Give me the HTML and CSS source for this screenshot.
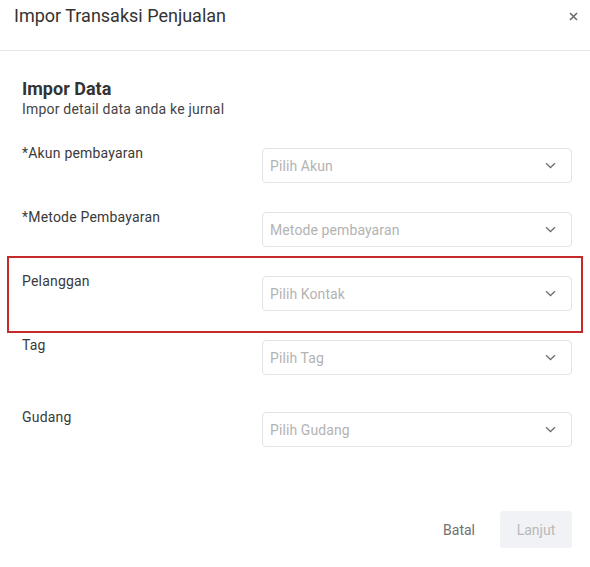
FILE: index.html
```html
<!DOCTYPE html>
<html lang="id">
<head>
<meta charset="utf-8">
<title>Impor Transaksi Penjualan</title>
<link rel="stylesheet" href="styles.css">
</head>
<body>
<div class="modal">
  <header class="modal-header">
    <h1 class="modal-title">Impor Transaksi Penjualan</h1>
    <button class="close" aria-label="Tutup">
      <svg width="9" height="9" viewBox="0 0 9 9"><path d="M1 1L8 8M8 1L1 8" stroke="#6b6b6b" stroke-width="1.6" fill="none"/></svg>
    </button>
  </header>
  <div class="modal-body">
    <div class="intro">
      <h2 class="intro-title">Impor Data</h2>
      <p class="intro-sub">Impor detail data anda ke jurnal</p>
    </div>

    <div class="row">
      <label class="label">*Akun pembayaran</label>
      <div class="select"><span class="placeholder">Pilih Akun</span>
        <svg class="chev" width="11" height="7" viewBox="0 0 11 7"><path d="M1 1.2L5.5 5.5L10 1.2" stroke="#707070" stroke-width="1.3" fill="none"/></svg></div>
    </div>
    <div class="row">
      <label class="label">*Metode Pembayaran</label>
      <div class="select"><span class="placeholder">Metode pembayaran</span>
        <svg class="chev" width="11" height="7" viewBox="0 0 11 7"><path d="M1 1.2L5.5 5.5L10 1.2" stroke="#707070" stroke-width="1.3" fill="none"/></svg></div>
    </div>
    <div class="row highlighted">
      <label class="label">Pelanggan</label>
      <div class="select"><span class="placeholder">Pilih Kontak</span>
        <svg class="chev" width="11" height="7" viewBox="0 0 11 7"><path d="M1 1.2L5.5 5.5L10 1.2" stroke="#707070" stroke-width="1.3" fill="none"/></svg></div>
      <div class="highlight-box"></div>
    </div>
    <div class="row">
      <label class="label">Tag</label>
      <div class="select"><span class="placeholder">Pilih Tag</span>
        <svg class="chev" width="11" height="7" viewBox="0 0 11 7"><path d="M1 1.2L5.5 5.5L10 1.2" stroke="#707070" stroke-width="1.3" fill="none"/></svg></div>
    </div>
    <div class="row row-last">
      <label class="label">Gudang</label>
      <div class="select"><span class="placeholder">Pilih Gudang</span>
        <svg class="chev" width="11" height="7" viewBox="0 0 11 7"><path d="M1 1.2L5.5 5.5L10 1.2" stroke="#707070" stroke-width="1.3" fill="none"/></svg></div>
    </div>

    <div class="footer">
      <button class="btn btn-text">Batal</button>
      <button class="btn btn-disabled">Lanjut</button>
    </div>
  </div>
</div>
</body>
</html>
```

FILE: styles.css
```css
* { box-sizing: border-box; }
html, body { margin: 0; padding: 0; background: #fff; }
body {
  font-family: Roboto, "Liberation Sans", Arial, sans-serif;
  color: #333;
  width: 590px;
}
.modal { width: 590px; }
.modal-header {
  height: 51px;
  border-bottom: 1px solid #e6e6e6;
  display: flex;
  align-items: flex-start;
  justify-content: space-between;
  padding: 4px 12px 0 14px;
}
.modal-title {
  margin: 0;
  font-size: 18px;
  font-weight: 400;
  line-height: 24px;
  color: #333;
}
.close {
  border: 0;
  background: none;
  padding: 0;
  width: 9px;
  height: 9px;
  margin-top: 8px;
  display: flex;
}
.modal-body { padding: 27px 18px 0 22px; }
.intro { margin-bottom: 25px; }
.intro-title {
  margin: 0;
  font-size: 18px;
  line-height: 22px;
  font-weight: 700;
  color: #333;
}
.intro-sub {
  margin: 0;
  font-size: 14px;
  line-height: 18px;
  letter-spacing: 0.2px;
  color: #444;
}
.row {
  display: grid;
  grid-template-columns: 240px 1fr;
  margin-bottom: 24px;
  position: relative;
}
.row-last { margin-top: 32px; margin-bottom: 0; }
.label {
  font-size: 14px;
  line-height: 20px;
  letter-spacing: 0.2px;
  color: #3a3a3a;
}
.select {
  margin-top: 5px;
  height: 35px;
  border: 1px solid #e3e3e3;
  border-radius: 4px;
  display: flex;
  align-items: center;
  justify-content: space-between;
  padding: 0 15px 0 7px;
}
.placeholder {
  font-size: 14px;
  letter-spacing: 0.1px;
  color: #b3b3b3;
}
.chev { display: block; }
.highlight-box {
  position: absolute;
  top: -15px;
  left: -15px;
  right: -11px;
  bottom: -22px;
  border: 2px solid #c42a2a;
  pointer-events: none;
}
.footer {
  margin-top: 64px;
  display: flex;
  justify-content: flex-end;
  gap: 9px;
}
.btn {
  font-family: inherit;
  font-size: 14px;
  height: 37px;
  border: 0;
  border-radius: 4px;
  background: none;
  padding: 0 16px;
}
.btn-text { color: #707070; }
.btn-disabled {
  background: #f1f2f5;
  color: #b8b8b8;
  width: 72px;
  padding: 0;
}
```
